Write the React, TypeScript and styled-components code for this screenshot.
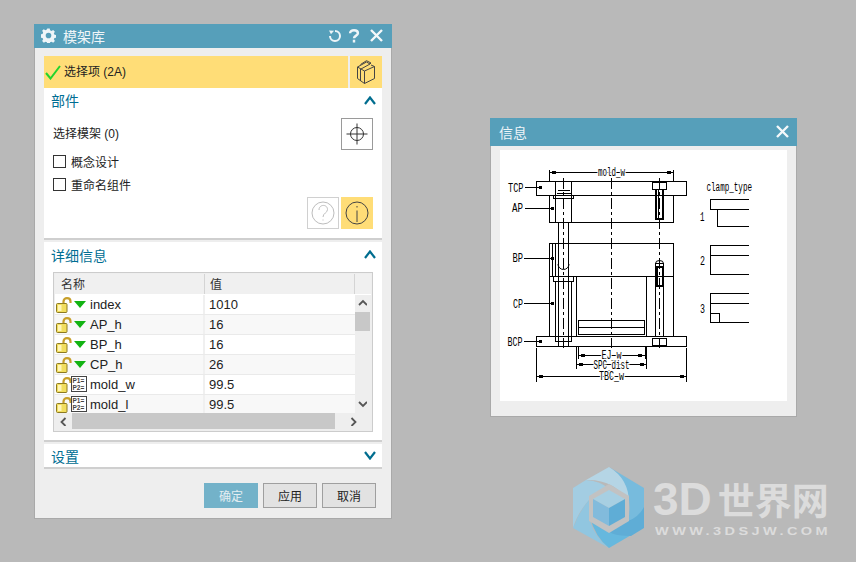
import React from "react";
import styled, { createGlobalStyle } from "styled-components";

const Global = createGlobalStyle`
  html, body { margin: 0; padding: 0; background: #b9b9b9; }
  body { width: 856px; height: 562px; overflow: hidden; position: relative;
    font-family: "Liberation Sans", "Noto Sans CJK SC", sans-serif; color: #222; }
`;

const Desk = styled.div`position: relative; width: 856px; height: 562px; background: #b9b9b9; overflow: hidden;`;

const Win = styled.section<{ $x: number; $y: number; $w: number; $h: number }>`
  position: absolute; left: ${p => p.$x}px; top: ${p => p.$y}px; width: ${p => p.$w}px; height: ${p => p.$h}px;
  box-sizing: border-box; background: #eeeeee; border: 1px solid #a9a9a9; border-top: 0;
  display: flex; flex-direction: column;
`;
const TitleBar = styled.header<{ $h: number; $left: number; $right: number }>`
  height: ${p => p.$h}px; flex: none; margin: 0 -1px; background: #569fba; color: #eef5f8; box-sizing: border-box;
  display: flex; align-items: center; padding: 0 ${p => p.$right}px 1px ${p => p.$left}px; gap: 7px;
`;
const TitleText = styled.h1`
  margin: 0; flex: 1; font: 400 14px "Noto Sans CJK SC", sans-serif; line-height: 20px; color: #eef5f8;
`;
const TitleTools = styled.div`display: flex; align-items: center; gap: 6px;`;
const HelpSlot = styled.span`display: flex; margin-right: 4px;`;
const Body = styled.div`flex: 1; padding: 8px 9px 0 9px; display: flex; flex-direction: column;`;

const SelectRow = styled.div`display: flex; gap: 2px; height: 32px; flex: none;`;
const SelectMain = styled.div`
  flex: 1; background: #ffdd77; display: flex; align-items: center; gap: 3px; padding-left: 1px;
  font-size: 12px; color: #222;
`;
const SelectLabel = styled.span`padding-bottom: 3px;`;
const SelectIcon = styled.div`width: 32px; background: #ffdd77; display: flex; align-items: center; justify-content: center;`;

const Panel = styled.div<{ $h: number; $gap?: number }>`
  height: ${p => p.$h}px; flex: none; box-sizing: border-box; background: #fff; border-bottom: 2px solid #cfcfcf;
  margin-bottom: ${p => p.$gap ?? 2}px; padding: 0 9px; display: flex; flex-direction: column;
`;
const SectionHead = styled.div<{ $h: number; $after: number }>`
  height: ${p => p.$h}px; flex: none; margin: 0 -3px ${p => p.$after}px -2px; display: flex; align-items: center; justify-content: space-between;
  color: #006e93; font: 400 14px "Noto Sans CJK SC", sans-serif;
`;
const PickRow = styled.div`display: flex; align-items: center; justify-content: space-between; height: 32px; margin-top: 4px; font-size: 12px; padding-bottom: 0;`;
const PickLabel = styled.span`padding-bottom: 3px;`;
const IconBtn = styled.div<{ $tone?: "plain" | "yellow" | "dim" }>`
  width: 32px; height: 32px; box-sizing: border-box; display: flex; align-items: center; justify-content: center;
  background: ${p => (p.$tone === "yellow" ? "#ffdd77" : "#fff")};
  border: ${p => (p.$tone === "yellow" ? "0" : p.$tone === "dim" ? "1px solid #d0d0d0" : "1px solid #9a9a9a")};
`;
const CheckRow = styled.label`display: flex; align-items: center; gap: 5px; height: 23px; font-size: 12px;`;
const CheckBox = styled.span`width: 13px; height: 13px; box-sizing: border-box; border: 1px solid #333; background: #fff; flex: none;`;
const Actions = styled.div`display: flex; justify-content: flex-end; gap: 2px; margin-top: 1px;`;

const Table = styled.div`
  width: 320px; height: 160px; box-sizing: border-box; border: 1px solid #cccccc; padding: 1px; background: #eeeeee;
  margin-top: 1px; display: flex; flex-direction: column; font-size: 13px;
`;
const HeadRow = styled.div`display: flex; height: 21px; flex: none; box-sizing: border-box; border-bottom: 1px solid #fff; background: #f0f0f0; font-size: 12px;`;
const HeadCell = styled.div<{ $w: number; $pad: number }>`
  width: ${p => p.$w}px; flex: none; box-sizing: border-box; padding-left: ${p => p.$pad}px; padding-bottom: 2px; display: flex; align-items: center;
  border-right: 1px solid #d4d4d4; color: #333;
`;
const TableMiddle = styled.div`display: flex; height: 118px; flex: none;`;
const Rows = styled.div`width: 300px; overflow: hidden; flex: none;`;
const Row = styled.div<{ $alt: boolean }>`
  height: 20px; display: flex; box-sizing: border-box; border-bottom: 1px solid #eaeaea;
  background: ${p => (p.$alt ? "#f8f8f8" : "#fff")};
`;
const NameCell = styled.div`
  width: 150px; flex: none; box-sizing: border-box; padding-left: 1px; border-right: 2px solid #f0f0f0;
  display: flex; align-items: center; gap: 2px; white-space: nowrap; color: #222; line-height: 18px;
`;
const ValueCell = styled.div`padding-left: 4px; display: flex; align-items: center; color: #222; line-height: 18px;`;
const Marker = styled.span<{ $expr: boolean }>`
  width: 16px; display: flex; justify-content: flex-start; flex: none;
  margin: ${p => (p.$expr ? "-2px -2px 0 -3px" : "0 -2px 0 0")};
  ${p => (p.$expr ? "width: 19px;" : "")}
`;
const Tri = styled.span`width: 0; height: 0; border-left: 6px solid transparent; border-right: 6px solid transparent; border-top: 7px solid #12b312;`;
const VScroll = styled.div`flex: 1; display: flex; flex-direction: column; align-items: flex-start; position: relative;`;
const ArrowCell = styled.div<{ $w: number; $h: number }>`
  width: ${p => p.$w}px; height: ${p => p.$h}px; flex: none; display: flex; align-items: center; justify-content: center;
`;
const VThumb = styled.div`width: 15px; height: 19px; background: #c8c8c8; flex: none;`;
const VFill = styled.div`flex: 1;`;
const HScroll = styled.div`display: flex; height: 16px; flex: none; margin-top: 0;`;
const HThumb = styled.div`width: 263px; background: #c8c8c8;`;
const HFill = styled.div`flex: 1; display: flex; justify-content: center; align-items: center;`;

const Buttons = styled.div`display: flex; justify-content: flex-end; gap: 5px; margin-top: 14px; padding-right: 6px;`;
const Btn = styled.button<{ $primary?: boolean }>`
  width: 54px; height: 25px; padding: 0; box-sizing: border-box; font: 400 12px "Noto Sans CJK SC", sans-serif;
  color: ${p => (p.$primary ? "#e4eef2" : "#222")}; background: ${p => (p.$primary ? "#73b2c9" : "#e2e2e2")};
  border: ${p => (p.$primary ? "0" : "1px solid #9f9f9f")};
`;

const InfoBody = styled.div`flex: 1; padding: 4px 9px 16px 9px; display: flex;`;
const Picture = styled.div`flex: 1; background: #fff; display: flex;`;

const Watermark = styled.div`position: absolute; left: 573px; top: 467px; display: flex; gap: 8px;`;
const WmText = styled.div`display: flex; flex-direction: column; padding-top: 12px;`;
const WmMain = styled.div`
  display: flex; align-items: center; gap: 6px; height: 40px; color: #dcdcdc; white-space: nowrap;
`;
const WmLatin = styled.span`font: 700 46px "Liberation Sans", sans-serif; line-height: 40px;`;
const WmCjk = styled.span`font: 700 37px "Noto Sans CJK SC", sans-serif; line-height: 40px;`;
const WmSub = styled.div`
  font: 700 11px "Liberation Sans", sans-serif; line-height: 13px; color: #dcdcdc; white-space: nowrap; letter-spacing: 2.6px;
  margin-top: 6px; margin-left: 2px; transform: scaleX(1.32); transform-origin: left;
`;

const Gear = () => (
  <svg width="15" height="15" viewBox="0 0 16 16" fill="#eef5f8">
    <path fillRule="evenodd" d="M6.700.5h2.600l.4 2 1.500.7 1.800-1.100 1.800 1.800-1.100 1.800.7 1.500 2 .4v2.600l-2 .4-.7 1.500 1.100 1.800-1.800 1.800-1.800-1.100-1.500.7-.4 2H6.700l-.4-2-1.500-.7-1.800 1.100-1.800-1.800 1.100-1.800-.7-1.500-2-.4V6.700l2-.4.7-1.500-1.100-1.800L2.900 1.200l1.800 1.100 1.500-.7zM8 5a3 3 0 1 0 0 6 3 3 0 0 0 0-6z" />
  </svg>
);
const Reload = () => (
  <svg width="14" height="14" viewBox="0 0 14 14" fill="none" stroke="#eef5f8" strokeWidth="2">
    <path d="M7 2a5 5 0 1 1-5 5" />
    <path d="M1 1.500l5 .2-3 3.600z" fill="#eef5f8" stroke="none" />
  </svg>
);
const Help = () => (
  <svg width="12" height="14" viewBox="0 0 12 15" fill="none" stroke="#eef5f8" strokeWidth="2.600">
    <path d="M1.800 4.600C1.800 2.600 3.600 1.400 6 1.400s4.200 1.300 4.200 3.200C10.200 7.200 6 7 6 10" />
    <path d="M6 11.500v3" />
  </svg>
);
const Close = () => (
  <svg width="13" height="13" viewBox="0 0 13 13" stroke="#f4f8fa" strokeWidth="2.400" fill="none"><path d="M1 1l11 11M12 1L1 12" /></svg>
);
const Check = () => (
  <svg width="16" height="15" viewBox="0 0 16 15" fill="none" stroke="#22d42c" strokeWidth="2"><path d="M1 8l4.500 5.500L15 1" /></svg>
);
const Books = () => (
  <svg width="18" height="24" viewBox="0 0 18 24" fill="none" stroke="#444" strokeWidth="1">
    <path d="M.5 7v11.500l7 5V11zM7.500 11l10-4.500v12l-10 5M.5 7l9-5 3.500 2-9 5M3.500 4.500l6-3.800L14 3l-1 1M17.500 6.500L14 5" />
    <path d="M3.500 9v12" />
  </svg>
);
const Chevron = ({ down }: { down?: boolean }) => (
  <svg width="12" height="9" viewBox="0 0 12 9" fill="none" stroke="#006d8f" strokeWidth="2.200"><path d={down ? "M1 1l5 6.500L11 1" : "M1 8l5-6.500L11 8"} /></svg>
);
const Target = () => (
  <svg width="22" height="22" viewBox="0 0 22 22" fill="none" stroke="#333" strokeWidth="1">
    <circle cx="11" cy="11" r="6.500" /><path d="M.5 11h21M11 .5v21" />
  </svg>
);
const QCircle = () => (
  <svg width="24" height="24" viewBox="0 0 24 24" fill="none" stroke="#bdbdbd" strokeWidth="1">
    <circle cx="12" cy="12" r="11" /><path d="M8 9c0-6 8.500-6 8.500-.5 0 3.500-4.500 3.500-4.500 7.500" /><path d="M12 18.500v1" />
  </svg>
);
const ICircle = () => (
  <svg width="24" height="24" viewBox="0 0 24 24" fill="none" stroke="#444" strokeWidth="1">
    <circle cx="12" cy="12" r="11" /><path d="M12 9.500V21M12 5v1.500" />
  </svg>
);
const Lock = () => (
  <svg width="16" height="16" viewBox="0 0 16 16">
    <path d="M7.500 7V4.500C7.500 2.500 9 1.200 11 1.200s3.500 1.300 3.500 3.300V6" fill="none" stroke="#c79f2a" strokeWidth="2.200" />
    <rect x=".5" y="6.500" width="10.500" height="9" rx="1" fill="#f2de5e" stroke="#8c7a22" strokeWidth="1" />
    <rect x="2" y="8" width="3.500" height="6" fill="#fff6b8" />
  </svg>
);
const Expr = () => (
  <svg width="16" height="16" viewBox="0 0 16 16">
    <rect x=".5" y=".5" width="15" height="15" fill="#fff" stroke="#444" />
    <text x="1.500" y="7" fontSize="6.500" fontWeight="700" fontFamily="Liberation Sans" fill="#444">P1=</text>
    <text x="1.500" y="14" fontSize="6.500" fontWeight="700" fontFamily="Liberation Sans" fill="#444">P2=</text>
  </svg>
);
const Arrow = ({ dir }: { dir: "u" | "d" | "l" | "r" }) => {
  const d = { u: "M1 6l4-4 4 4", d: "M1 2l4 4 4-4", l: "M6.500 1l-4 4 4 4", r: "M2.500 1l4 4-4 4" }[dir];
  return <svg width="9" height="9" viewBox="0 0 9 9" fill="none" stroke="#555" strokeWidth="1.800"><path d={d} /></svg>;
};

const rows = [
  { n: "index", v: "1010", e: false },
  { n: "AP_h", v: "16", e: false },
  { n: "BP_h", v: "16", e: false },
  { n: "CP_h", v: "26", e: false },
  { n: "mold_w", v: "99.5", e: true },
  { n: "mold_l", v: "99.5", e: true },
];

const Cad = styled.svg`display: block; width: 287px; height: 251px;`;
const L = (p: { d: string }) => <path d={p.d} fill="none" stroke="#000" strokeWidth="1" />;
const Dash = (p: { x: number; y1: number; y2: number }) => (
  <line x1={p.x} x2={p.x} y1={p.y1} y2={p.y2} stroke="#000" strokeWidth="1" strokeDasharray="11 3 3 3" />
);
const CadText = (p: { x: number; y: number; w: number; s: string; halo?: boolean }) => (
  <text
    x={p.x} y={p.y} textLength={p.w} lengthAdjust="spacingAndGlyphs"
    fontFamily="Liberation Mono" fontSize="12" fill="#000"
    stroke={p.halo ? "#fff" : "none"} strokeWidth={p.halo ? 3 : 0} paintOrder="stroke"
  >{p.s}</text>
);
const DimLine = ({ x1, x2, y, s, w, base }: { x1: number; x2: number; y: number; s: string; w: number; base: number }) => (
  <g>
    <path d={`M${x1} ${y}H${x2}`} fill="none" stroke="#000" strokeWidth="1" shapeRendering="crispEdges" />
    <rect x={x1 + 3} y={y - 1.500} width="4" height="3" fill="#000" />
    <rect x={x2 - 7} y={y - 1.500} width="4" height="3" fill="#000" />
    <CadText x={(x1 + x2) / 2 - w / 2} y={base} w={w} s={s} halo />
  </g>
);
const Dot = (p: { x: number; y: number }) => <rect x={p.x - 1.500} y={p.y - 1.500} width="3" height="3" fill="#000" />;

const Drawing = () => (
  <Cad viewBox="500 150 287 251">
    <g shapeRendering="crispEdges">
      <L d="M536.500 181.500H686.500V195.500H536.500ZM549.500 195.500V222.500H673.500V195.500" />
      <L d="M549.500 243.500H673.500V276.500H549.500ZM549.500 276.500V336.500M576.500 276.500V336.500M646.500 276.500V336.500M673.500 276.500V336.500" />
      <L d="M536.500 336.500H686.500V346.500H536.500Z" />
      <L d="M578.500 320.500H644.500V334.500H578.500ZM578.500 327.500H644.500" />
      <L d="M555.500 181.500V222.500M571.500 181.500V222.500M553.500 195.500H573.500V198.500H553.500ZM557.500 190.500H569.500M556.500 193.500H571.500" />
      <L d="M558.500 222.500V243.500M568.500 222.500V243.500M552.500 243.500V276.500M555.500 243.500V276.500M558.500 243.500V346.500M568.500 243.500V346.500" />
      <L d="M553.500 276.500V281.500H573.500V276.500M555.500 281.500V341.500H571.500V281.500" />
      <path d="M652.500 182.500H666.500V189.500H652.500ZM656 189.500H663V219H656Z" fill="none" stroke="#000" strokeWidth="1.800" />
      <L d="M658.500 189.500V219" />
      <path d="M656.500 267H662.500V285.500H656.500Z" fill="none" stroke="#000" strokeWidth="2" />
      <L d="M655.500 263.500H663.500V276.500H655.500ZM655.500 276.500V336.500M663.500 276.500V336.500" />
      <path d="M652.500 338.500H666.500V345.500H652.500Z" fill="none" stroke="#000" strokeWidth="1.800" />
      <L d="M536.500 348V382M686.500 348V382M576.500 347V369M646.500 347V369M578.500 347V359M645.500 347V359M549.500 170V181M673.500 170V181" />
      <L d="M525 187.500H540M525 208.500H552M524 258.500H552M524 303.500H552M524 341.500H540" />
      <L d="M576.500 336.500H646.500" />
    </g>
    <path d="M558 264a5.500 5.500 0 0 0 11 0" fill="none" stroke="#000" />
    <path d="M655.500 263.500a4 3 0 0 1 8 0" fill="none" stroke="#000" />
    <Dash x={563.500} y1={178} y2={348} />
    <Dash x={611.500} y1={178} y2={348} />
    <Dash x={659.500} y1={178} y2={348} />
    <Dot x={540.500} y={187.500} /><Dot x={552.500} y={208.500} /><Dot x={552.500} y={258.500} /><Dot x={552.500} y={303.500} /><Dot x={540.500} y={341.500} />
    <DimLine x1={549} x2={674} y={172.500} s="mold_w" w={27} base={176} />
    <DimLine x1={578} x2={645} y={355.500} s="EJ_w" w={20} base={359} />
    <DimLine x1={576} x2={647} y={364.500} s="SPC_dist" w={36} base={368.500} />
    <DimLine x1={536} x2={687} y={376.500} s="TBC_w" w={25} base={379.500} />
    <CadText x={508} y={192} w={15.500} s="TCP" />
    <CadText x={512} y={212} w={11} s="AP" />
    <CadText x={512.500} y={262} w={10.500} s="BP" />
    <CadText x={513} y={308} w={10} s="CP" />
    <CadText x={507.500} y={345.500} w={15} s="BCP" />
    <CadText x={706.500} y={191} w={45.500} s="clamp_type" />
    <CadText x={700} y={221} w={4.500} s="1" />
    <CadText x={700} y={264.500} w={5} s="2" />
    <CadText x={700} y={312.500} w={5} s="3" />
    <g shapeRendering="crispEdges">
      <L d="M749 199.500H710.500V209.500H749M717.500 209.500V226.500H749" />
      <L d="M749 245.500H710.500V274.500H749M710.500 255.500H749" />
      <L d="M749 293.500H710.500V322.500H749M710.500 303.500H749M710.500 313.500H719.500V322.500" />
    </g>
  </Cad>
);

const Logo = () => (
  <svg width="72" height="82" viewBox="0 0 72 82">
    <path d="M36 0L71 21V46L55 56Q62 18 36 0Z" fill="#77bbdd" />
    <path d="M36 0L13 13Q42 12 56 36Q56 12 36 0Z" fill="#b5d5e5" />
    <path d="M0 21L13 13Q28 14 36 22L17 32Q5 45 0 61Z" fill="#a3cde2" />
    <path d="M0 61Q6 44 17 32V54Q22 70 36 81Z" fill="#91c6e0" />
    <path d="M17 50Q28 68 60 67L36 81Q22 70 17 50Z" fill="#66b8de" />
    <path d="M71 40V61L58 69Q35 69 36 62L55 54Q66 50 71 40Z" fill="#5fadd6" />
    <path d="M36 17L56 29V54L36 66L16 54V29Z" fill="#c2c2c2" />
    <path d="M36 23l16 9-16 9-16-9z" fill="#a7cfe2" />
    <path d="M20 32l16 9v18l-16-9z" fill="#82bbdc" />
    <path d="M52 32l-16 9v18l16-9z" fill="#5fadd6" />
  </svg>
);

export default function App() {
  return (
    <Desk>
      <Global />
      <Win $x={34} $y={24} $w={358} $h={495}>
        <TitleBar $h={24} $left={7} $right={9}>
          <Gear />
          <TitleText>模架库</TitleText>
          <TitleTools><Reload /><HelpSlot><Help /></HelpSlot><Close /></TitleTools>
        </TitleBar>
        <Body>
          <SelectRow>
            <SelectMain><Check /><SelectLabel>选择项 (2A)</SelectLabel></SelectMain>
            <SelectIcon><Books /></SelectIcon>
          </SelectRow>
          <Panel $h={152}>
            <SectionHead $h={24} $after={2}>部件<Chevron /></SectionHead>
            <PickRow><PickLabel>选择模架 (0)</PickLabel><IconBtn><Target /></IconBtn></PickRow>
            <CheckRow><CheckBox />概念设计</CheckRow>
            <CheckRow><CheckBox />重命名组件</CheckRow>
            <Actions>
              <IconBtn $tone="dim"><QCircle /></IconBtn>
              <IconBtn $tone="yellow"><ICircle /></IconBtn>
            </Actions>
          </Panel>
          <Panel $h={200}>
            <SectionHead $h={25} $after={4}>详细信息<Chevron /></SectionHead>
            <Table>
              <HeadRow>
                <HeadCell $w={150} $pad={6}>名称</HeadCell>
                <HeadCell $w={150} $pad={5}>值</HeadCell>
              </HeadRow>
              <TableMiddle>
                <Rows>
                  {rows.map((r, i) => (
                    <Row key={r.n} $alt={i % 2 === 1}>
                      <NameCell>
                        <Lock />
                        <Marker $expr={r.e}>{r.e ? <Expr /> : <Tri />}</Marker>
                        {r.n}
                      </NameCell>
                      <ValueCell>{r.v}</ValueCell>
                    </Row>
                  ))}
                </Rows>
                <VScroll>
                  <ArrowCell $w={15} $h={17}><Arrow dir="u" /></ArrowCell>
                  <VThumb />
                  <VFill />
                  <ArrowCell $w={15} $h={17}><Arrow dir="d" /></ArrowCell>
                </VScroll>
              </TableMiddle>
              <HScroll>
                <ArrowCell $w={17} $h={16}><Arrow dir="l" /></ArrowCell>
                <HThumb />
                <HFill><Arrow dir="r" /></HFill>
              </HScroll>
            </Table>
          </Panel>
          <Panel $h={25} $gap={0}>
            <SectionHead $h={23} $after={0}>设置<Chevron down /></SectionHead>
          </Panel>
          <Buttons>
            <Btn $primary>确定</Btn>
            <Btn>应用</Btn>
            <Btn>取消</Btn>
          </Buttons>
        </Body>
      </Win>
      <Win $x={490} $y={118} $w={307} $h={299}>
        <TitleBar $h={28} $left={9} $right={8}>
          <TitleText>信息</TitleText>
          <Close />
        </TitleBar>
        <InfoBody>
          <Picture><Drawing /></Picture>
        </InfoBody>
      </Win>
      <Watermark>
        <Logo />
        <WmText>
          <WmMain><WmLatin>3D</WmLatin><WmCjk>世界网</WmCjk></WmMain>
          <WmSub>WWW.3DSJW.COM</WmSub>
        </WmText>
      </Watermark>
    </Desk>
  );
}
